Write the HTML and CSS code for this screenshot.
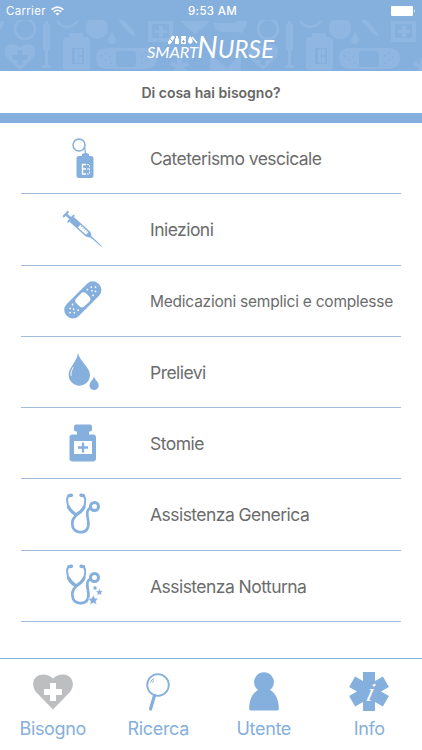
FILE: index.html
```html
<!DOCTYPE html>
<html lang="it">
<head>
<meta charset="utf-8">
<title>Smart Nurse</title>
<link rel="stylesheet" href="styles.css">
</head>
<body>
<svg class="defs" width="0" height="0" aria-hidden="true">
  <defs>
    <g id="stetho" fill="none" stroke="currentColor" stroke-linecap="round" stroke-linejoin="round">
      <path stroke-width="2" d="M20 16.500C16 17 17 22 18 27C19.500 31 23 32.500 25.500 35"/>
      <path stroke-width="2" d="M32 16.500C36 17 35.500 22 34.500 27C33 31 30 32.500 27.500 35"/>
      <path stroke-width="3.200" d="M18.500 28C20.500 32.500 23 34 26 36C29.500 34 32.500 32 34 28"/>
      <path stroke-width="3.400" d="M19 16.600L21.500 16.300M31 16.300L33.500 16.600"/>
      <path stroke-width="2.700" d="M25.500 37C22.500 40 21.500 44 23 48.500C25 54 34.500 55 37.500 49.500C40.500 43.500 36 38 37.500 32.500C38 30.500 39 29.500 40.500 28.500"/>
      <circle cx="44.500" cy="27.500" r="4" stroke-width="3"/>
    </g>
    <pattern id="medical" width="243" height="51" patternUnits="userSpaceOnUse">
      <g fill="#90b7e1" stroke="none">
        <path d="M-8 1h12c0 5-3 9-7 12zM235 1h12c0 5-3 9-7 12z"/>
        <path fill-rule="evenodd" d="M20 50C12 42 5 38 5 31C5 23 16 22 20 28C24 22 35 23 35 31C35 38 28 42 20 50zM17.500 30v5h-5v5h5v5h5v-5h5v-5h-5v-5z"/>
        <path d="M45 1h3v3h2v26h-2v15h3v3h-9v-3h3v-15h-2v-26h2z"/>
        <path fill-rule="evenodd" d="M69 13h14v4h3q4 0 4 4v26q0 3-4 3h-19q-4 0-4-3v-26q0-4 4-4h2zM72 28v16h12v-16z"/>
        <path d="M75 29h3v14h-3zM79 29h3v6h-3zM79 37h3v6h-3z"/>
        <circle cx="97" cy="8" r="11"/>
        <path d="M112 11c1 6 4 6 4 9a4 4 0 0 1-8 0c0-3 3-4 4-9z"/>
        <path d="M118 0l5 0 10 10 3 7-7-4z"/>
        <path fill-rule="evenodd" d="M106 28h40q11 0 11 10t-11 11h-40q-10-1-10-11t10-10zM119 31q-3 0-3 3v10q0 3 3 3h14q3 0 3-3v-10q0-3-3-3z"/>
        <path fill-rule="evenodd" d="M148 1h25v21h-25zM152 4v14h17v-14z"/>
        <path d="M159 6h4v4h4v3h-4v4h-4v-4h-4v-3h4z"/>
        <path d="M195 14C187 7 182 4 181 1h28c-2 4-6 7-14 13z"/>
        <path d="M177 38h5v6l5-3 2 4-5 3 4 3h-15l3-3-6-3 2-4 5 3z"/>
        <path d="M213 3h34v5q-4 6-9 4h-16q-8-1-9-9zM210 34l17 14 14-14v17h-31z"/>
      </g>
      <g fill="#85afdc"><circle cx="102" cy="36" r="1"/><circle cx="106" cy="33" r="1"/><circle cx="106" cy="40" r="1"/><circle cx="110" cy="37" r="1"/><circle cx="111" cy="43" r="1"/><circle cx="142" cy="36" r="1"/><circle cx="146" cy="33" r="1"/><circle cx="146" cy="40" r="1"/><circle cx="150" cy="37" r="1"/><circle cx="142" cy="43" r="1"/></g>
      <g fill="none" stroke="#90b7e1" stroke-width="2.500">
        <circle cx="25" cy="9" r="10"/><path d="M57 1q10 12 21 0"/>
      </g>
    </pattern>
  </defs>
</svg>

<div class="app">
  <header class="header">
    <div class="status">
      <div class="carrier">Carrier
        <svg class="wifi" viewBox="0 0 12 9"><g fill="none" stroke="#fff" stroke-width="1.500"><path d="M.6 3.200q5.400-4.600 10.800 0"/><path d="M2.500 5.300q3.500-3 7 0"/></g><path fill="#fff" d="M4.100 6.700q1.900-1.400 3.800 0L6 8.700z"/></svg>
      </div>
      <div class="time">9:53 AM</div>
      <svg class="battery" viewBox="0 0 25 10"><rect width="22" height="10" rx="1" fill="#fff"/><path fill="#fff" d="M23 3q1.500 2 0 4z"/></svg>
    </div>
    <svg class="banner" viewBox="0 0 422 51">
      <rect width="422" height="51" fill="url(#medical)"/>
      <g class="logo" fill="#fff">
        <text class="smart" x="147" y="38" textLength="51" lengthAdjust="spacingAndGlyphs">SMART</text>
        <text class="nurse" x="197" y="37.500" textLength="77" lengthAdjust="spacingAndGlyphs"><tspan class="capital">N</tspan>URSE</text>
        <path d="M168 22l4-6q3-1 2.500 2l-4 6q-3 1-2.500-2zM176 18v-2h2v2l1 1v5h-4v-5zM181 16h5v2h-1l1 1v5h-5v-5l1-1h-1zM190 16q4 4 2 7-3 2-4-1 0-3 2-6z"/>
        <path fill="none" stroke="#fff" stroke-width="1.300" d="M192 17l5 6"/>
        <path fill="none" stroke="#85afdc" d="M182 21.500h3M183.500 20v3M170 19l2 2"/>
      </g>
    </svg>
  </header>
  <h1 class="title"><span>Di cosa hai bisogno?</span></h1>
  <main class="list">
    <div class="row">
      <svg class="icon" viewBox="0 0 70 71"><g fill="none" stroke="currentColor"><circle cx="29" cy="22" r="6" stroke-width="1.500"/><path stroke-width="1.200" d="M34.500 23l1 8"/></g><path fill="currentColor" d="M32 31q3.500-2 7 0v2h2q2.500 0 2.500 2.500v17q0 2.500-2.500 2.500h-12q-2.500 0-2.500-2.500v-17q0-2.500 2.500-2.500h3z"/><path fill="none" stroke="#fff" stroke-width="1.400" d="M36 41.500h-3.500v9.500h3.500M33 46h3"/><path fill="none" stroke="#fff" stroke-dasharray="2 1.200" d="M37 41.500h2.500v9.500H37M37 46h3"/></svg>
      <span class="label" id="cateterismo">Cateterismo vescicale</span>
    </div>
    <div class="row">
      <svg class="icon" viewBox="0 0 70 71"><g transform="translate(16.500 20.700) rotate(42)" fill="currentColor"><rect x="-2" y="-4" width="2.200" height="8" rx="1"/><rect y="-1.300" width="8" height="2.600"/><rect x="5" y="-5" width="2" height="10" rx="1"/><path d="M7-3.300h22q3 1 4 2.800v1q-1 1.800-4 2.800H7z"/><path fill="#fff" d="M17-1.800h11v3.600H17z"/><path d="M33-.8l14.500 .4v.8l-14.500 .4z"/><path stroke="currentColor" stroke-width=".7" d="M19-2v2M21.500-2v2M24-2v2M26.500-2v2"/></g></svg>
      <span class="label" id="iniezioni">Iniezioni</span>
    </div>
    <div class="row">
      <svg class="icon" viewBox="0 0 70 71"><g transform="translate(32.800 34.900) rotate(-45)"><rect x="-22.500" y="-8.500" width="45" height="17" rx="8" fill="currentColor"/><rect x="-7" y="-5.800" width="14" height="11.600" rx="4" fill="#fff"/><g fill="#fff"><circle cx="-18" cy="0" r=".9"/><circle cx="-15" cy="-3" r=".9"/><circle cx="-15" cy="3" r=".9"/><circle cx="-13" cy="0" r=".9"/><circle cx="-10.500" cy="-4" r=".9"/><circle cx="-10.500" cy="4" r=".9"/><circle cx="18" cy="0" r=".9"/><circle cx="15" cy="-3" r=".9"/><circle cx="15" cy="3" r=".9"/><circle cx="13" cy="0" r=".9"/><circle cx="10.500" cy="-4" r=".9"/><circle cx="10.500" cy="4" r=".9"/></g></g></svg>
      <span class="label small" id="medicazioni">Medicazioni semplici e complesse</span>
    </div>
    <div class="row">
      <svg class="icon" viewBox="0 0 70 71"><g fill="currentColor"><path d="M28 17C30 26 40 31 40 39A10.600 10.600 0 0 1 18.700 39C18.700 31 27 26 28 17z"/><path d="M44 40.500C45 44 48.700 46 48.700 49.500A4.600 4.600 0 0 1 39.500 49.500C39.500 46 43 44 44 40.500z"/></g><path d="M23 31.500q-2.600 4-2 8" fill="none" stroke="#fff" stroke-width=".9" stroke-linecap="round"/></svg>
      <span class="label" id="prelievi">Prelievi</span>
    </div>
    <div class="row">
      <svg class="icon" viewBox="0 0 70 71"><path fill="currentColor" d="M26 16.500h14q2 0 2 2v3q0 2-2 2h-1v3h4q3 0 3 3v21q0 3-3 3h-20.500q-3 0-3-3v-21q0-3 3-3h4.500v-3h-1q-2 0-2-2v-3q0-2 2-2z"/><path fill="#fff" d="M24 33h18v13H24z"/><path stroke="currentColor" stroke-width="2.300" d="M28 39.500h10M33 34.500v10"/></svg>
      <span class="label" id="stomie">Stomie</span>
    </div>
    <div class="row">
      <svg class="icon" viewBox="0 0 70 71"><use href="#stetho"/></svg>
      <span class="label" id="generica">Assistenza Generica</span>
    </div>
    <div class="row">
      <svg class="icon" viewBox="0 0 70 71"><use href="#stetho"/><g fill="currentColor" stroke="#fff" stroke-width=".4"><path d="M43.500 45l1.300 3.200 3.500.3-2.500 2.400.7 3.500-3.200-1.600-3.200 2 .6-3.700-2.700-2.500 3.700-.3z"/><path d="M49.500 38.500l.9 2.300 2.500.2-1.900 1.800.6 2.600-2.200-1.300-2.300 1.500.6-2.800-2-1.700 2.600-.2z"/><circle cx="45" cy="38" r="1.900"/></g></svg>
      <span class="label" id="notturna">Assistenza Notturna</span>
    </div>
  </main>
  <nav class="tabs">
    <div class="tab active"><svg viewBox="0 0 44 42"><path fill="currentColor" d="M22 40.500L5 23C-1 15 3 5.500 12 5.500Q18 5.500 22 9.500Q26 5.500 32 5.500C41 5.500 45 15 39 23z"/><path stroke="#fff" stroke-width="6" d="M13 23h18M22 14v18"/></svg><span id="bisogno">Bisogno</span></div>
    <div class="tab"><svg viewBox="0 0 44 42"><circle cx="22" cy="16" r="10.800" fill="none" stroke="currentColor" stroke-width="1.800"/><path d="M18.500 26.500L14.500 40" stroke="currentColor" stroke-width="3.200" stroke-linecap="round"/><path d="M14.500 13.500q1-3 3.500-4M16.500 13.500q.5-1.500 1.500-2" fill="none" stroke="currentColor"/></svg><span id="ricerca">Ricerca</span></div>
    <div class="tab"><svg viewBox="0 0 44 42"><path fill="currentColor" d="M16 21A9.900 9.900 0 1 1 28 21C34 24 37 32 36.800 40Q36.800 41.500 35 41.500H9Q7.200 41.500 7.200 40C7 32 10 24 16 21z"/></svg><span id="utente">Utente</span></div>
    <div class="tab"><svg viewBox="0 0 44 42"><g stroke="currentColor" stroke-width="12"><path d="M22 3v39"/><path d="M22 3v39" transform="rotate(60 22 22.500)"/><path d="M22 3v39" transform="rotate(120 22 22.500)"/></g><text class="info-i" transform="translate(18 31.500) skewX(-14)">i</text></svg><span id="info">Info</span></div>
  </nav>
</div>
</body>
</html>
```
FILE: styles.css
```css
* { box-sizing: border-box; }
body { margin: 0; background: #fff; font-family: Inter, "Liberation Sans", sans-serif; }
.defs { position: absolute; }
.app { width: 422px; height: 750px; display: flex; flex-direction: column; color: #85afdc; overflow: hidden; }
.header { height: 71px; flex: none; background: #85afdc; }
.status { height: 20px; padding: 2px 6px 0; display: grid; grid-template-columns: 1fr auto 1fr; align-items: center; color: #fff; font-size: 11.5px; letter-spacing: .3px; }
.carrier { display: flex; align-items: center; gap: 5px; }
.wifi { width: 13px; height: 10px; }
.time { font-weight: 500; padding-left: 3px; }
.battery { width: 25px; height: 10px; justify-self: end; margin-bottom: 1px; }
.banner { display: block; width: 422px; height: 51px; }
.logo text { font-family: Lato, sans-serif; font-style: italic; }
.smart { font-size: 16px; }
.nurse { font-size: 25px; }
.capital { font-size: 30px; }
.title { flex: none; height: 52px; margin: 0; border-bottom: 10.500px solid #85afdc; display: flex; align-items: center; justify-content: center; color: #666; font-size: 14px; font-weight: 600; line-height: 20px; }
.title span { padding-top: 1px; }
.list { flex: none; height: 535px; padding: 0 21px; }
.row { height: 71.25px; display: flex; align-items: center; border-bottom: 1px solid #a0bddd; }
.icon { width: 70px; height: 71px; margin-left: 29px; flex: none; }
.label { margin-left: 30px; padding-top: 2px; color: #6c6c6c; font-size: 17.500px; letter-spacing: -.54px; line-height: 24px; white-space: nowrap; }
.label.small { font-size: 15.500px; letter-spacing: -.23px; }
.tabs { flex: 1; border-top: 1px solid #85afdc; display: grid; grid-template-columns: repeat(4, 1fr); padding-top: 10px; }
.tab { display: flex; flex-direction: column; align-items: center; font-size: 18px; letter-spacing: -.35px; line-height: 24px; }
.tab svg { width: 44px; height: 42px; }
.tab span { margin-top: 6px; }
.active svg { color: #bcbec0; }
.info-i { font: italic 26px "Liberation Serif", serif; fill: #fff; }
```
